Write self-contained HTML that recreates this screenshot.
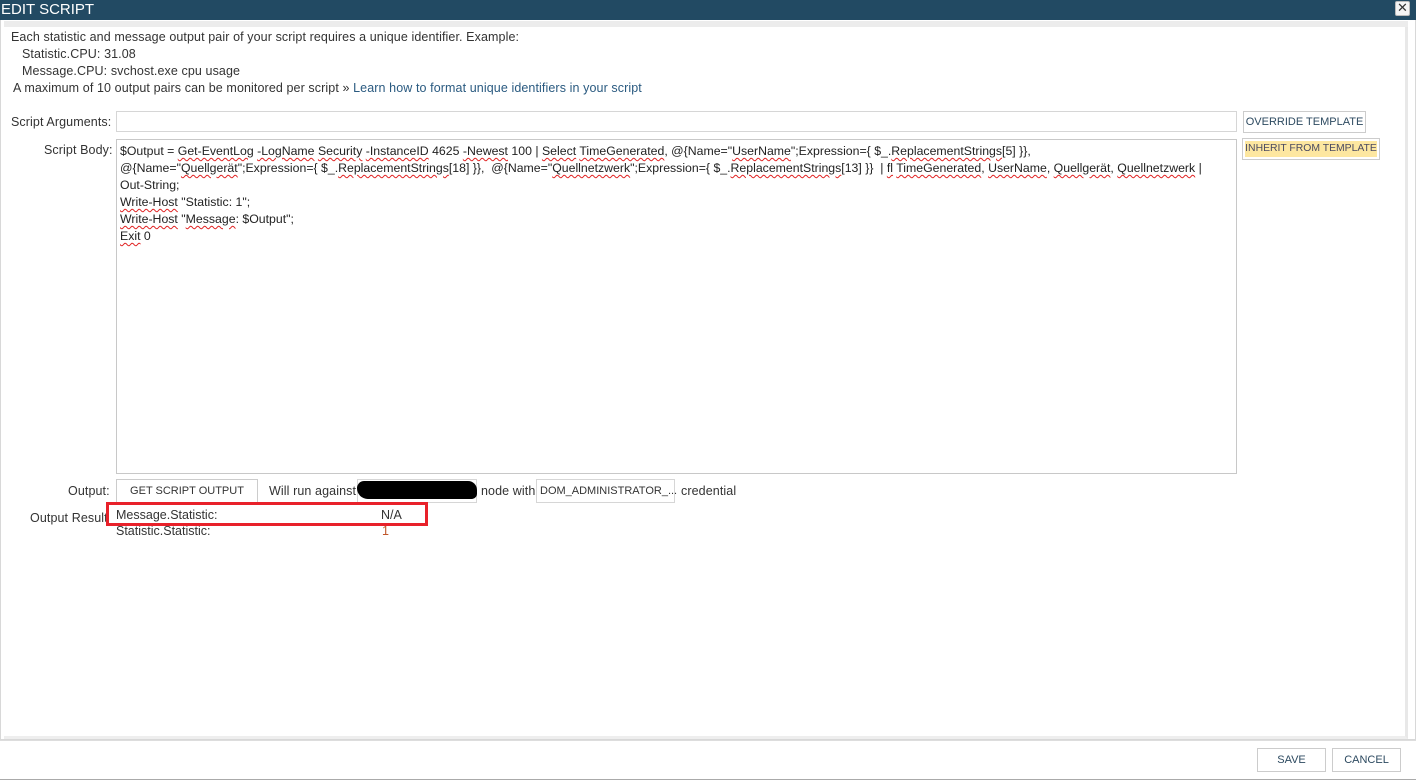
<!DOCTYPE html>
<html><head><meta charset="utf-8"><style>
*{box-sizing:border-box;margin:0;padding:0}
body{width:1416px;height:780px;background:#fff;font-family:"Liberation Sans",sans-serif;font-size:12.5px;letter-spacing:0.1px;color:#333;position:relative;overflow:hidden}
.title{position:absolute;left:0;top:0;width:1416px;height:20px;background:#224a63;color:#fff;font-size:15px;letter-spacing:0;line-height:20px;padding-left:1px}
.close{position:absolute;right:6px;top:1px;width:15px;height:15px;background:#f4f4f4;border:1px solid #bbb;border-radius:2px;color:#333;font-size:13px;line-height:12px;text-align:center}
.outer{position:absolute;left:0;top:20px;width:1416px;height:720px;border:1px solid #d8d8d8;border-top:none;background:#fff}
.panel{position:absolute;left:4px;top:27px;width:1404px;height:712px;border-right:3px solid #e8e8e8;border-bottom:3px solid #eee;}
.topgray{position:absolute;left:4px;top:21px;width:1404px;height:6px;background:#ececec}
.t{position:absolute;white-space:nowrap}
a{color:#2a5a80;text-decoration:none}
.inp{position:absolute;border:1px solid #d6d6d6;background:#fff}
.btn{position:absolute;border:1px solid #ccc;background:#fff;color:#2d4a60;font-size:11px;letter-spacing:0;text-align:center;white-space:nowrap}
.code{position:absolute;left:116px;top:139px;width:1121px;height:335px;border:1px solid #c8c8c8;padding:3px 3px;font-size:12.3px;letter-spacing:0;line-height:17px;color:#222}
.w{text-decoration:underline wavy #e02020;text-decoration-thickness:1px;text-underline-offset:2px}
.foot{position:absolute;left:0;top:740px;width:1416px;height:40px;border-top:1px solid #ddd;border-bottom:1px solid #aaa;background:#fff}
</style></head><body>
<div class="title">EDIT SCRIPT<div class="close">✕</div></div>
<div class="outer"></div>
<div class="topgray"></div>
<div class="panel"></div>
<div class="t" style="left:11px;top:30px">Each statistic and message output pair of your script requires a unique identifier. Example:</div>
<div class="t" style="left:22px;top:47px">Statistic.CPU: 31.08</div>
<div class="t" style="left:22px;top:64px">Message.CPU: svchost.exe cpu usage</div>
<div class="t" style="left:13px;top:81px">A maximum of 10 output pairs can be monitored per script » <a>Learn how to format unique identifiers in your script</a></div>
<div class="t" style="left:11px;top:115px">Script Arguments:</div>
<div class="inp" style="left:116px;top:111px;width:1121px;height:21px"></div>
<div class="btn" style="left:1243px;top:111px;width:123px;height:22px;line-height:20px">OVERRIDE TEMPLATE</div>
<div class="btn" style="left:1242px;top:138px;width:138px;height:22px;padding-top:0"><span style="background:#fde7a0;display:block;margin:2px 2px;line-height:16px;color:#4a4a60;font-size:10.4px">INHERIT FROM TEMPLATE</span></div>
<div class="t" style="left:44px;top:143px">Script Body:</div>
<div class="code">$Output = <span class="w">Get-EventLog</span> <span class="w">-LogName</span> <span class="w">Security</span> <span class="w">-InstanceID</span> 4625 <span class="w">-Newest</span> 100 | <span class="w">Select</span> <span class="w">TimeGenerated</span>, @{Name="<span class="w">UserName</span>";Expression={ $_.<span class="w">ReplacementStrings</span>[5] }},<br>@{Name="<span class="w">Quellgerät</span>";Expression={ $_.<span class="w">ReplacementStrings</span>[18] }},&nbsp; @{Name="<span class="w">Quellnetzwerk</span>";Expression={ $_.<span class="w">ReplacementStrings</span>[13] }}&nbsp; | <span class="w">fl</span> <span class="w">TimeGenerated</span>, <span class="w">UserName</span>, <span class="w">Quellgerät</span>, <span class="w">Quellnetzwerk</span> |<br>Out-String;<br><span class="w">Write-Host</span> "Statistic: 1";<br><span class="w">Write-Host</span> "<span class="w">Message</span>: $Output";<br><span class="w">Exit</span> 0</div>
<div class="t" style="left:68px;top:484px">Output:</div>
<div class="btn" style="left:116px;top:479px;width:142px;height:24px;line-height:22px;color:#333">GET SCRIPT OUTPUT</div>
<div class="t" style="left:269px;top:484px">Will run against</div>
<div class="inp" style="left:357px;top:479px;width:120px;height:24px"></div>
<div style="position:absolute;left:357px;top:481px;width:120px;height:18px;background:#000;border-radius:8px 10px 6px 12px"></div>
<div class="t" style="left:481px;top:484px">node with</div>
<div class="inp" style="left:536px;top:479px;width:139px;height:24px"></div>
<div class="t" style="left:540px;top:485px;font-size:11px;letter-spacing:0">DOM_ADMINISTRATOR_...</div>
<div class="t" style="left:681px;top:484px">credential</div>
<div class="t" style="left:30px;top:511px">Output Result</div>
<div class="t" style="left:116px;top:524px;color:#333;letter-spacing:0">Statistic.Statistic:</div>
<div class="t" style="left:382px;top:524px;color:#c0562a">1</div>
<div style="position:absolute;left:106px;top:502px;width:322px;height:24px;border:3px solid #e8212a;background:#fff"></div>
<div class="t" style="left:116px;top:508px;letter-spacing:0">Message.Statistic:</div>
<div class="t" style="left:381px;top:508px;letter-spacing:0">N/A</div>
<div class="foot"></div>
<div class="btn" style="left:1257px;top:748px;width:69px;height:24px;line-height:22px">SAVE</div>
<div class="btn" style="left:1332px;top:748px;width:69px;height:24px;line-height:22px">CANCEL</div>
</body></html>
